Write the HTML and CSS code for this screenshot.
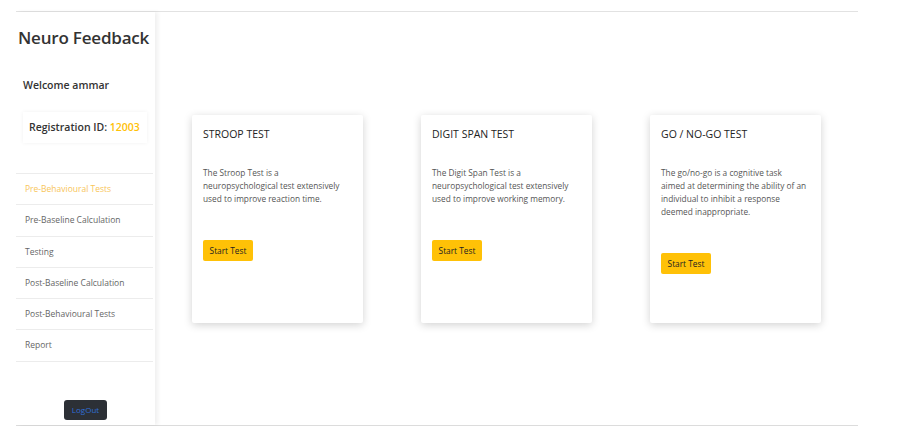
FILE: index.html
```html
<!DOCTYPE html>
<html lang="en">

<head>
    <meta charset="UTF-8">
    <meta name="viewport" content="width=device-width, initial-scale=1.0">
    <title>Neuro Feedback</title>
    <link rel="stylesheet" href="styles.css">
</head>

<body>
    <div class="page">
        <aside class="sidebar">
            <h1 class="brand">Neuro Feedback</h1>
            <p class="welcome">Welcome ammar</p>
            <div class="reg-box">Registration ID: <span class="reg-id">12003</span></div>
            <ul class="nav">
                <li class="active">Pre-Behavioural Tests</li>
                <li>Pre-Baseline Calculation</li>
                <li>Testing</li>
                <li>Post-Baseline Calculation</li>
                <li>Post-Behavioural Tests</li>
                <li>Report</li>
            </ul>
            <div class="logout-wrap">
                <button class="logout">LogOut</button>
            </div>
        </aside>

        <main class="main">
            <div class="card">
                <h2>STROOP TEST</h2>
                <p>The Stroop Test is a<br>neuropsychological test extensively<br>used to improve reaction time.</p>
                <button class="start">Start Test</button>
            </div>
            <div class="card">
                <h2>DIGIT SPAN TEST</h2>
                <p>The Digit Span Test is a<br>neuropsychological test extensively<br>used to improve working memory.</p>
                <button class="start">Start Test</button>
            </div>
            <div class="card">
                <h2>GO / NO-GO TEST</h2>
                <p>The go/no-go is a cognitive task<br>aimed at determining the ability of an<br>individual to inhibit a response<br>deemed inappropriate.</p>
                <button class="start">Start Test</button>
            </div>
        </main>
    </div>
</body>

</html>
```

FILE: styles.css
```css
body {
    font-family: 'Open Sans', sans-serif;
    background-color: #fff;
    margin: 0;
    padding: 0;
}

.page {
    display: flex;
    margin: 11px 41px 0 16px;
    height: 413px;
    border-top: 1px solid #e2e2e2;
    border-bottom: 1px solid #dcdcdc;
}

.sidebar {
    width: 139px;
    flex-shrink: 0;
    background: #fff;
    box-shadow: 3px 0 4px rgba(0, 0, 0, 0.06);
}

.brand {
    font-size: 17px;
    font-weight: 600;
    line-height: 24px;
    color: #333;
    margin: 14px 0 0 2px;
    letter-spacing: -0.2px;
}

.welcome {
    font-size: 10.5px;
    font-weight: 600;
    line-height: 16px;
    color: #333;
    margin: 27px 0 0 7px;
}

.reg-box {
    margin: 19px 0 0 7px;
    width: 118px;
    height: 31px;
    padding-left: 6px;
    font-size: 10.5px;
    font-weight: 600;
    line-height: 31px;
    color: #333;
    box-shadow: 0 0 4px rgba(0, 0, 0, 0.06);
}

.reg-id {
    color: #ffc107;
}

.nav {
    list-style: none;
    margin: 30px 0 0 0;
    padding: 0;
    width: 137px;
    border-top: 1px solid #ececec;
}

.nav li {
    height: 30.3px;
    line-height: 30px;
    padding-left: 9px;
    font-size: 8.5px;
    color: #666;
    border-bottom: 1px solid #ececec;
}

.nav li.active {
    color: #f8c55a;
}

.logout-wrap {
    display: flex;
    justify-content: center;
    margin-top: 38px;
}

.logout {
    background-color: #2c3036;
    color: #2f6fd6;
    border: none;
    border-radius: 3px;
    width: 43px;
    height: 20px;
    padding: 0;
    font-family: 'Open Sans', sans-serif;
    font-size: 8px;
}

.main {
    flex: 1;
    display: flex;
    align-items: flex-start;
    gap: 58px;
    padding: 103px 0 0 37px;
}

.card {
    width: 149px;
    height: 186px;
    padding: 11px;
    background: #fff;
    box-shadow: 0 2px 8px rgba(0, 0, 0, 0.18);
    border-radius: 2px;
}

.card h2 {
    font-size: 10.5px;
    font-weight: 500;
    line-height: 16px;
    color: #222;
    margin: 0;
}

.card p {
    font-size: 8.3px;
    line-height: 13px;
    color: #555;
    margin: 24px 0 0 0;
    white-space: nowrap;
}

.start {
    margin-top: 35px;
    background-color: #ffc107;
    color: #222;
    border: none;
    border-radius: 2px;
    width: 50px;
    height: 21px;
    padding: 0;
    font-family: 'Open Sans', sans-serif;
    font-size: 8.3px;
    cursor: pointer;
}
```
